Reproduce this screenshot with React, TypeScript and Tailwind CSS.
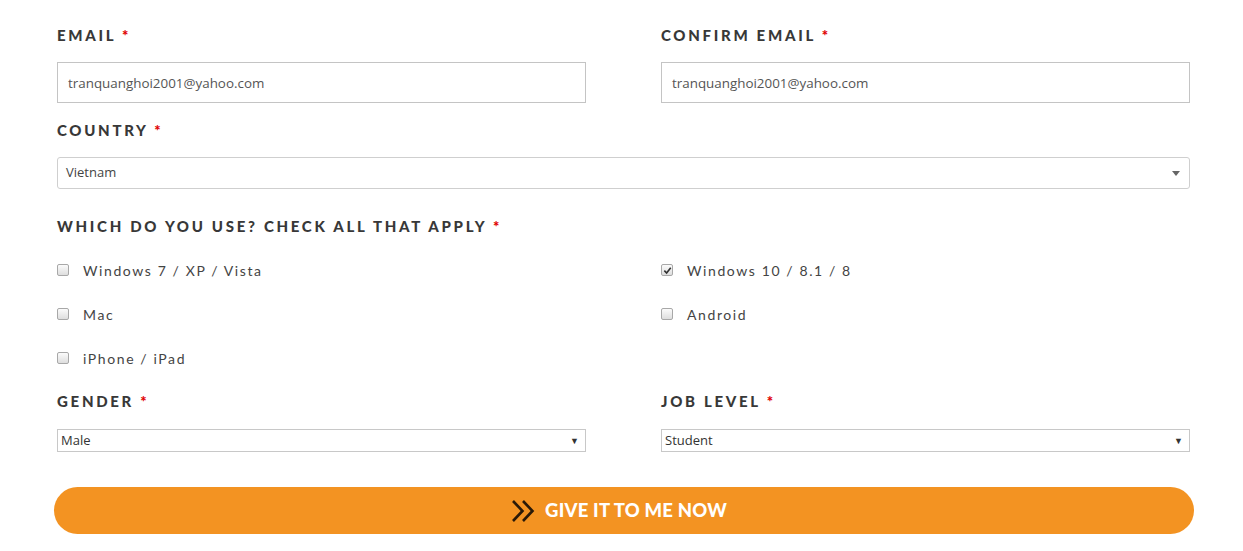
import { useState } from "react";

const platforms = [
  { id: "win7", label: "Windows 7 / XP / Vista", checked: false },
  { id: "win10", label: "Windows 10 / 8.1 / 8", checked: true },
  { id: "mac", label: "Mac", checked: false },
  { id: "android", label: "Android", checked: false },
  { id: "ios", label: "iPhone / iPad", checked: false },
];

function Label({ children }: { children: React.ReactNode }) {
  return (
    <div className="font-['Lato',sans-serif] text-[15px] font-black uppercase tracking-[2.7px] text-[#383838] leading-[20px]">
      {children} <span className="text-[#e00000]">*</span>
    </div>
  );
}

function Box({ checked }: { checked: boolean }) {
  return (
    <span className="w-[12px] h-[12px] rounded-[2px] border border-[#a8a8a8] bg-gradient-to-b from-[#fbfbfb] to-[#dedede] flex items-center justify-center">
      {checked && (
        <svg width="9" height="9" viewBox="0 0 10 10">
          <path d="M1.5 5.2 L4 7.8 L8.6 2" fill="none" stroke="#333" strokeWidth="1.8" />
        </svg>
      )}
    </span>
  );
}

function SmallSelect({ value }: { value: string }) {
  return (
    <div className="h-[23px] border border-[#c8c8c8] bg-white flex items-center justify-between pl-[3px] pr-[6px] font-['Open_Sans',sans-serif] text-[13px] text-[#333]">
      <span>{value}</span>
      <span className="text-[9px] text-[#333]">▼</span>
    </div>
  );
}

function EmailInput() {
  return (
    <div className="mt-[17px] h-[41px] border border-[#c4c4c4] flex items-center pl-[10px] pt-[1px] font-['Open_Sans',sans-serif] text-[13.4px] text-[#555]">
      tranquanghoi2001@yahoo.com
    </div>
  );
}

export default function App() {
  const [checks] = useState(platforms);

  return (
    <div className="w-[1243px] h-[551px] bg-white overflow-hidden">
      <div className="pl-[57px] pr-[53px] pt-[25px]">
        <div className="grid grid-cols-2 gap-x-[75px]">
          <div>
            <Label>Email</Label>
            <EmailInput />
          </div>
          <div>
            <Label>Confirm Email</Label>
            <EmailInput />
          </div>
        </div>

        <div className="mt-[17px]">
          <Label>Country</Label>
          <div className="mt-[17px] h-[32px] rounded-[3px] border border-[#cfcfcf] flex items-center justify-between pl-[8px] pr-[9px] font-['Open_Sans',sans-serif] text-[13px] text-[#444]">
            <span>Vietnam</span>
            <span className="w-0 h-0 border-l-[4px] border-r-[4px] border-t-[5px] border-l-transparent border-r-transparent border-t-[#666]" />
          </div>
        </div>

        <div className="mt-[27px]">
          <Label>Which do you use? Check all that apply</Label>
          <div className="mt-[12px] grid grid-cols-2 gap-x-[75px]">
            {checks.map((p) => (
              <div key={p.id} className="h-[44px] flex items-center gap-[14px]">
                <Box checked={p.checked} />
                <span className="font-['Lato',sans-serif] text-[14px] tracking-[1.6px] text-[#444]">
                  {p.label}
                </span>
              </div>
            ))}
          </div>
        </div>

        <div className="mt-[11px] grid grid-cols-2 gap-x-[75px]">
          <div>
            <Label>Gender</Label>
            <div className="mt-[18px]">
              <SmallSelect value="Male" />
            </div>
          </div>
          <div>
            <Label>Job Level</Label>
            <div className="mt-[18px]">
              <SmallSelect value="Student" />
            </div>
          </div>
        </div>
      </div>

      <div className="pl-[54px] pr-[49px] mt-[35px]">
        <button className="w-full h-[47px] rounded-full bg-[#f39322] flex items-center justify-center gap-[8px] pr-[10px]">
          <svg width="26" height="24" viewBox="0 0 26 24">
            <path d="M2 2 L11.5 12 L2 22 M12 2 L21.5 12 L12 22" fill="none" stroke="#2a1a08" strokeWidth="2.6" />
          </svg>
          <span className="font-['Lato',sans-serif] text-[18.5px] font-black text-white tracking-[0.2px]">
            GIVE IT TO ME NOW
          </span>
        </button>
      </div>
    </div>
  );
}
